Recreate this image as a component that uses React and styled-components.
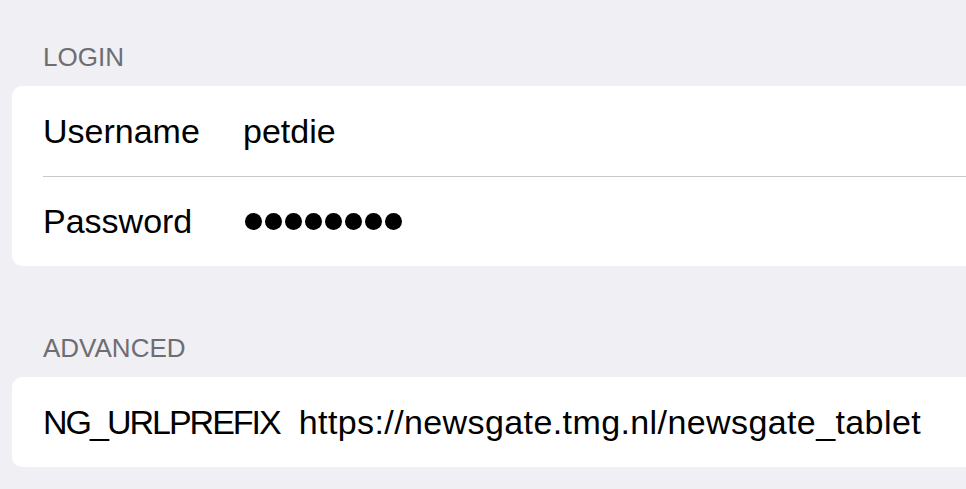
import React from 'react'
import styled, { createGlobalStyle } from 'styled-components'

const GlobalStyle = createGlobalStyle`
    html, body {
        margin: 0;
        padding: 0;
        background: #efeff4;
        overflow: hidden;
    }
    body {
        font-family: "Liberation Sans", Arial, sans-serif;
        -webkit-font-smoothing: antialiased;
    }
`;

const Page = styled.main`
    width: 966px;
    height: 489px;
    padding: 40px 0 0 12px;
    box-sizing: border-box;
`;

const Section = styled.section`
    margin-bottom: ${props => props.$gap || 0}px;
`;

const SectionHeader = styled.h3`
    margin: 0;
    padding: 0 0 0 31px;
    height: 46px;
    font-size: 26px;
    font-weight: 400;
    line-height: 34px;
    color: #6d6d72;
    text-transform: uppercase;
`;

const Group = styled.ul`
    list-style: none;
    margin: 0;
    padding: 0;
    background: #fff;
    border-radius: 10px 0 0 10px;
    overflow: hidden;
`;

const Row = styled.li`
    display: flex;
    align-items: center;
    height: 90px;
    padding-left: 31px;
    position: relative;
    font-size: 34px;
    color: #000;

    & + &::before {
        content: "";
        position: absolute;
        top: 0;
        left: 31px;
        right: 0;
        border-top: 1px solid #c8c7cc;
    }
`;

const Label = styled.span`
    flex: 0 0 ${props => props.$width ? props.$width + 'px' : 'auto'};
    margin-right: ${props => props.$width ? 0 : 19}px;
    letter-spacing: ${props => props.$tight ? '-2px' : 'normal'};
    white-space: nowrap;
`;

const Value = styled.span`
    white-space: nowrap;
    letter-spacing: ${props => props.$wide ? '0.4px' : 'normal'};
`;

const Dots = styled.span`
    display: flex;
    gap: 3px;
    padding-left: 2px;
`;

const Dot = styled.i`
    width: 17px;
    height: 17px;
    border-radius: 50%;
    background: #000;
`;

const App = () => {
    return (
        <Page>
            <GlobalStyle />
            <Section $gap={65}>
                <SectionHeader>Login</SectionHeader>
                <Group>
                    <Row>
                        <Label $width={200}>Username</Label>
                        <Value>petdie</Value>
                    </Row>
                    <Row>
                        <Label $width={200}>Password</Label>
                        <Dots aria-label="password">
                            {Array.from({ length: 8 }).map((_, i) => <Dot key={i} />)}
                        </Dots>
                    </Row>
                </Group>
            </Section>
            <Section>
                <SectionHeader>Advanced</SectionHeader>
                <Group>
                    <Row>
                        <Label $tight>NG_URLPREFIX</Label>
                        <Value $wide>https://newsgate.tmg.nl/newsgate_tablet</Value>
                    </Row>
                </Group>
            </Section>
        </Page>
    )
}

export default App
